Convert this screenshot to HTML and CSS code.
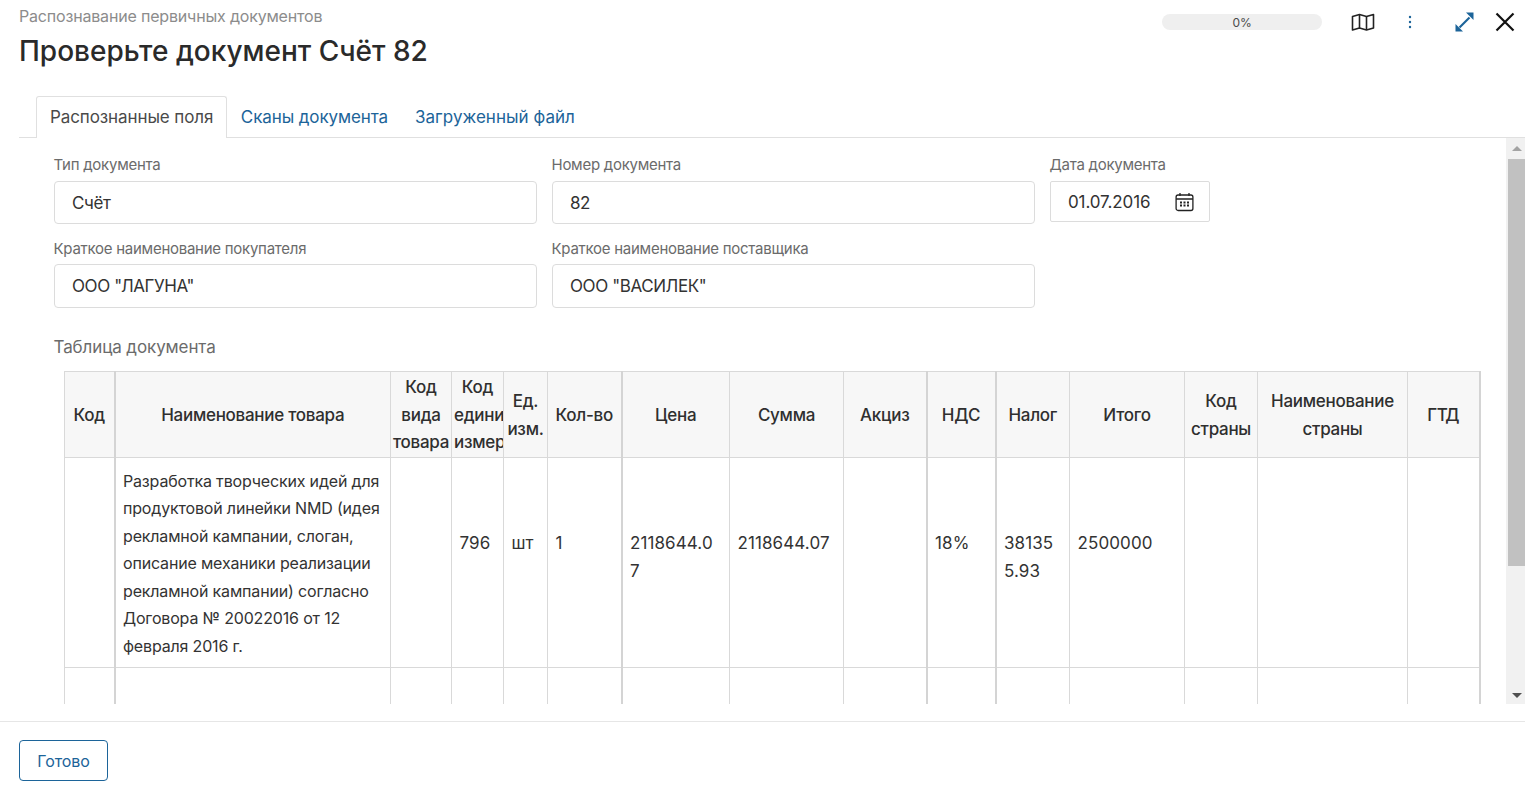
FILE: index.html
```html
<!DOCTYPE html>
<html lang="ru">
<head>
<meta charset="utf-8">
<title>Проверьте документ Счёт 82</title>
<link rel="stylesheet" href="styles.css">
</head>
<body>
<div class="dialog">
  <header class="head">
    <div class="titles">
      <div class="crumb">Распознавание первичных документов</div>
      <h1 class="title">Проверьте документ Счёт 82</h1>
    </div>
    <div class="tools">
      <div class="progress">0%</div>
      <svg class="ic-map" width="24" height="20" viewBox="0 0 24 20" fill="none" stroke="#222" stroke-width="1.600" stroke-linejoin="round"><path d="M1.500 4.500 8.500 2.500 15.500 4.500 22.500 2.500V16L15.500 18 8.500 16 1.500 18Z"/><path d="M8.500 2.500V16M15.500 4.500V18"/></svg>
      <svg class="ic-dots" width="4" height="14" viewBox="0 0 4 14" fill="#1c6499"><circle cx="2" cy="2" r="1.200"/><circle cx="2" cy="7" r="1.200"/><circle cx="2" cy="12" r="1.200"/></svg>
      <svg class="ic-exp" width="22" height="22" viewBox="0 0 22 22" fill="#1c6499"><path d="M20.500 1.500H13L20.500 9Z"/><path d="M2.500 20.500H10L2.500 13Z"/><path d="M6.500 16.500 16.500 6.500" stroke="#1c6499" stroke-width="2.200"/></svg>
      <svg class="ic-close" width="20" height="20" viewBox="0 0 20 20" fill="none" stroke="#111" stroke-width="2.200"><path d="M1.500 1.500 18.500 18.500M18.500 1.500 1.500 18.500"/></svg>
    </div>
  </header>
  <nav class="tabs">
    <a class="tab active">Распознанные поля</a>
    <a class="tab">Сканы документа</a>
    <a class="tab">Загруженный файл</a>
  </nav>
  <div class="pane">
    <main class="scroll">
      <div class="fields">
        <div class="field"><label class="lbl">Тип документа</label><div class="input">Счёт</div></div>
        <div class="field"><label class="lbl">Номер документа</label><div class="input">82</div></div>
        <div class="field"><label class="lbl">Дата документа</label>
          <div class="input date">01.07.2016
            <svg width="19" height="20" viewBox="0 0 19 20" fill="none" stroke="#222" stroke-width="1.300"><rect x="1.100" y="3" width="16.800" height="15.500" rx="2"/><path d="M1.100 7H17.900M5 1V4M14 1V4"/><path d="M5 10.500h2M8.500 10.500h2M12 10.500h2M5 13.500h2M8.500 13.500h2M12 13.500h2" stroke-width="1.800"/></svg>
          </div>
        </div>
        <div class="field"><label class="lbl">Краткое наименование покупателя</label><div class="input">ООО "ЛАГУНА"</div></div>
        <div class="field"><label class="lbl">Краткое наименование поставщика</label><div class="input">ООО "ВАСИЛЕК"</div></div>
      </div>
      <div class="tbl-title">Таблица документа</div>
      <table class="doc">
        <colgroup>
          <col class="c1"><col class="c2"><col class="c3"><col class="c4"><col class="c5"><col class="c6"><col class="c7"><col class="c8"><col class="c9"><col class="c10"><col class="c11"><col class="c12"><col class="c13"><col class="c14"><col class="c15">
        </colgroup>
        <thead>
          <tr>
            <th class="thick">Код</th><th>Наименование товара</th><th>Код вида товара</th><th>Код единицы измерения</th><th class="tight">Ед. изм.</th><th class="thick">Кол-во</th><th>Цена</th><th>Сумма</th><th class="thick">Акциз</th><th class="thick">НДС</th><th>Налог</th><th>Итого</th><th class="tight">Код страны</th><th class="tight">Наименование страны</th><th>ГТД</th>
          </tr>
        </thead>
        <tbody>
          <tr class="r">
            <td class="thick"></td>
            <td class="name">Разработка творческих идей для продуктовой линейки NMD (идея рекламной кампании, слоган, описание механики реализации рекламной кампании) согласно Договора № 20022016 от 12 февраля 2016 г.</td>
            <td></td><td>796</td><td>шт</td><td class="thick">1</td><td>2118644.07</td><td>2118644.07</td><td class="thick"></td><td class="thick">18%</td><td>381355.93</td><td>2500000</td><td></td><td></td><td></td>
          </tr>
          <tr class="r">
            <td class="thick"></td><td></td><td></td><td></td><td></td><td class="thick"></td><td></td><td></td><td class="thick"></td><td class="thick"></td><td></td><td></td><td></td><td></td><td></td>
          </tr>
        </tbody>
      </table>
    </main>
    <div class="sbar" aria-hidden="true">
      <div class="arrow up"></div>
      <div class="thumb"></div>
      <div class="arrow down"></div>
    </div>
  </div>
  <footer class="foot"><button class="done" type="button">Готово</button></footer>
</div>
</body>
</html>
```
FILE: styles.css
```css
* { box-sizing: border-box; }
html, body { margin: 0; height: 100%; overflow: hidden; background: #fff; }
body { font-family: Inter, "Noto Sans", sans-serif; color: #333; letter-spacing: -0.1px; }
.dialog { height: 791px; display: flex; flex-direction: column; }
.head { height: 96px; flex: none; display: flex; justify-content: space-between; padding: 8px 10px 0 19px; }
.crumb { font-size: 16px; line-height: 17px; color: #8c8c8c; letter-spacing: -0.18px; }
.title { margin: 9px 0 0; font-size: 28px; line-height: 34px; font-weight: 500; color: #2a2a2a; letter-spacing: 0; }
.tools { display: flex; align-items: flex-start; }
.progress { width: 160px; height: 16px; margin-top: 6px; border-radius: 8px; background: #efefef; font-size: 12px; line-height: 17px; text-align: center; color: #4a4a4a; }
.ic-map { margin: 4px 0 0 29px; }
.ic-dots { margin: 7px 0 0 33px; }
.ic-exp { margin: 3px 0 0 41px; }
.ic-close { margin: 4px 0 0 20px; }
.tabs { margin-left: 19px; height: 42px; flex: none; display: flex; padding-left: 17px; border-bottom: 1px solid #e0e0e0; }
.tab { height: 42px; padding: 0 13.500px; font-size: 17px; line-height: 42px; color: #1c6499; }
.tab:last-child { letter-spacing: 0.03px; }
.tab.active { color: #4a4a4a; background: #fff; border: 1px solid #e0e0e0; border-bottom: 0; border-radius: 3px 3px 0 0; padding: 0 13px; line-height: 40px; }
.pane { height: 566px; flex: none; display: flex; }
.scroll { flex: 1; min-width: 0; overflow: hidden; padding-left: 54px; }
.sbar { width: 19px; flex: none; background: #f1f1f1; display: flex; flex-direction: column; padding-left: 2px; }
.arrow { height: 21px; flex: none; display: flex; align-items: center; justify-content: center; }
.arrow::before { content: ""; border-left: 5px solid transparent; border-right: 5px solid transparent; }
.up::before { border-bottom: 5px solid #a3a3a3; }
.down { margin-top: auto; height: 17px; }
.down::before { border-top: 5px solid #505050; }
.thumb { height: 407px; background: #c1c1c1; }
.fields { display: grid; grid-template-columns: 483px 483px 160px; column-gap: 15px; padding-top: 18px; }
.field { display: flex; flex-direction: column; }
.field:nth-child(3) { grid-row: 1; grid-column: 3; }
.field:nth-child(4) { grid-column: 1; }
.lbl { font-size: 15px; line-height: 17px; color: #6b6b6b; height: 25px; letter-spacing: -0.26px; margin-left: -0.500px; }
.input { height: 43px; border: 1px solid #dcdcdc; border-radius: 4px; padding: 0 17px; font-size: 17px; line-height: 43px; color: #333; margin-bottom: 16px; letter-spacing: -0.4px; }
.field:nth-child(n+4) .lbl { height: 24px; }
.field:nth-child(n+4) .input { height: 44px; line-height: 43px; margin-bottom: 0; }
.date { height: 41px; line-height: 41px; display: flex; justify-content: space-between; align-items: center; padding: 1px 15px 0 17px; border-radius: 2px; letter-spacing: -0.1px; }
.tbl-title { margin-top: 28px; margin-left: -0.500px; font-size: 17px; line-height: 22px; color: #6b6b6b; }
.doc { margin: 13px 0 0 10px; width: 1415px; table-layout: fixed; border-collapse: collapse; font-size: 17px; color: #333; }
.c1 { width: 50px; } .c2 { width: 276px; } .c3 { width: 61px; } .c4 { width: 52px; } .c5 { width: 44px; }
.c6 { width: 74px; } .c7 { width: 108px; } .c8 { width: 114px; } .c9 { width: 83px; } .c10 { width: 69px; }
.c11 { width: 74px; } .c12 { width: 115px; } .c13 { width: 73px; } .c14 { width: 150px; } .c15 { width: 72px; }
th, td { border: 1px solid #d9d9d9; overflow: hidden; }
th { height: 86px; background: #f7f7f7; padding: 2px 2px 0; font-weight: 500; line-height: 27.500px; font-size: 17px; text-align: center; color: #2f2f2f; letter-spacing: -0.28px; }
th.tight { padding: 2px 3px 0; }
td { padding: 72px 8px 0 7.500px; line-height: 27.500px; word-break: break-word; vertical-align: top; letter-spacing: 0.1px; }
.thick { border-right: 2px solid #d4d4d4; }
.r { height: 210px; }
td.name { font-size: 16px; letter-spacing: -0.17px; padding: 9.500px 7.500px 6px; }
.doc tr:first-child th:last-child, .doc td:last-child { border-right: 2px solid #d4d4d4; }
.foot { margin-top: 17px; flex: 1; border-top: 1px solid #e6e6e6; padding: 18px 0 0 19px; }
.done { width: 89px; height: 41px; background: #fff; border: 1px solid #1c6499; border-radius: 4px; font: 16px Inter, "Noto Sans", sans-serif; letter-spacing: -0.1px; color: #1c6499; padding: 0; }
```
